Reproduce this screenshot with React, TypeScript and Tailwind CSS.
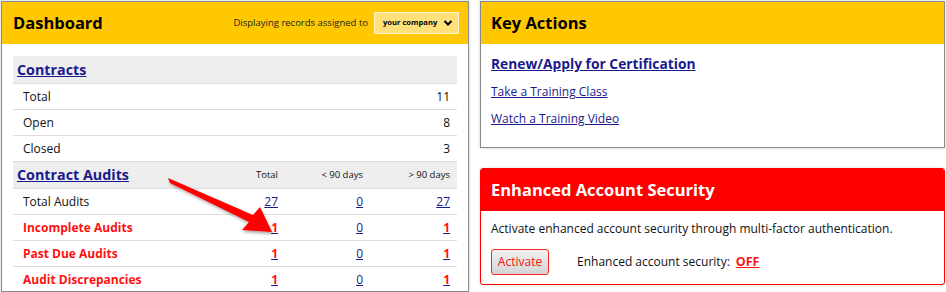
import React from "react";

const link = "text-[#1a1a8c] underline";

const contractRows = [
  { label: "Total", value: "11" },
  { label: "Open", value: "8" },
  { label: "Closed", value: "3" },
];

const auditRows = [
  { label: "Total Audits", values: ["27", "0", "27"], alert: false },
  { label: "Incomplete Audits", values: ["1", "0", "1"], alert: true },
  { label: "Past Due Audits", values: ["1", "0", "1"], alert: true },
  { label: "Audit Discrepancies", values: ["1", "0", "1"], alert: true },
];

const Arrow = () => (
  <svg className="absolute left-0 top-0 pointer-events-none" width="300" height="260" viewBox="0 0 300 260">
    <defs>
      <filter id="sh" x="-20%" y="-20%" width="140%" height="140%">
        <feDropShadow dx="1" dy="2" stdDeviation="1.5" floodColor="#000" floodOpacity="0.35" />
      </filter>
    </defs>
    <polygon
      points="166,176 251,213 258,205 270,230 240,228 247,220 168,181"
      fill="#ff0000"
      filter="url(#sh)"
    />
  </svg>
);

const Dashboard = () => (
  <div className="relative w-[468px] border border-[#8a8a8a] bg-white shadow-[0_0_3px_rgba(0,0,0,0.2)]">
    <div className="h-[42px] bg-[#ffc800] flex items-center justify-between pl-[11px] pr-[9px]">
      <h1 className="text-[16.5px] font-bold text-black">Dashboard</h1>
      <div className="flex items-center gap-[6px]">
        <span className="text-[9.5px] text-[#222]">Displaying records assigned to</span>
        <div className="w-[85px] h-[22px] bg-[#ffe07a] border border-[#fff3c4] flex items-center justify-between pl-[8px] pr-[5px]">
          <span className="text-[7.6px] font-bold text-black whitespace-nowrap">your company</span>
          <svg width="10" height="8" viewBox="0 0 10 8">
            <path d="M1.5 2 L5 5.5 L8.5 2" stroke="#000" strokeWidth="2" fill="none" />
          </svg>
        </div>
      </div>
    </div>
    <div className="pt-3 px-[11px]">
      <div className="h-[28px] bg-[#eeeeee] border-b border-[#dddddd] flex items-center pl-1">
        <a className={`${link} text-[14.3px] font-bold`}>Contracts</a>
      </div>
      {contractRows.map((r) => (
        <div key={r.label} className="h-[26px] border-b border-[#dddddd] flex items-center justify-between pl-[10px] pr-[7px] text-[12px] text-[#111]">
          <span>{r.label}</span>
          <span>{r.value}</span>
        </div>
      ))}
      <div className="h-[27px] bg-[#eeeeee] border-b border-[#dddddd] grid grid-cols-[1fr_80px_85px_87px] items-center pl-1 pr-[7px] text-[9.5px] text-[#111]">
        <a className={`${link} text-[14.3px] font-bold`}>Contract Audits</a>
        <span className="text-right">Total</span>
        <span className="text-right">&lt; 90 days</span>
        <span className="text-right">&gt; 90 days</span>
      </div>
      {auditRows.map((r) => (
        <div key={r.label} className="h-[26px] border-b border-[#dddddd] grid grid-cols-[1fr_80px_85px_87px] items-center pl-[10px] pr-[7px] text-[12px]">
          <span className={r.alert ? "font-bold text-[#ff1111]" : "text-[#111]"}>{r.label}</span>
          {r.values.map((v, i) => (
            <span key={i} className="text-right">
              <a
                className={`underline decoration-[#1a1a8c] ${
                  r.alert && v === "1" ? "text-[#ff1111] font-bold" : "text-[#1a1a8c]"
                }`}
              >
                {v}
              </a>
            </span>
          ))}
        </div>
      ))}
    </div>
    <Arrow />
  </div>
);

const KeyActions = () => (
  <div className="h-[147px] border border-[#8a8a8a] bg-white shadow-[0_0_3px_rgba(0,0,0,0.2)]">
    <div className="h-[42px] bg-[#ffc800] flex items-center px-[10px]">
      <h2 className="text-[16.5px] font-bold text-black">Key Actions</h2>
    </div>
    <div className="px-[10px] pt-[9px] flex flex-col">
      <a className={`${link} text-[13.8px] font-bold leading-[22px]`}>Renew/Apply for Certification</a>
      <a className={`${link} text-[12px] leading-[27px] mt-[3px]`}>Take a Training Class</a>
      <a className={`${link} text-[12px] leading-[27px]`}>Watch a Training Video</a>
    </div>
  </div>
);

const Security = () => (
  <div className="h-[117px] border border-[#ff0000] rounded-[3px] bg-white overflow-hidden shadow-[0_0_3px_rgba(0,0,0,0.15)]">
    <div className="h-[42px] bg-[#ff0000] flex items-center px-[10px]">
      <h2 className="text-[16.5px] font-bold text-white">Enhanced Account Security</h2>
    </div>
    <div className="px-[10px] pt-[9px]">
      <p className="text-[12px] text-[#111] leading-[18px]">
        Activate enhanced account security through multi-factor authentication.
      </p>
      <div className="flex items-center mt-[11px]">
        <button className="w-[58px] h-[26px] rounded-[3px] border border-[#ff2222] bg-gradient-to-b from-[#f2f2f2] to-[#d4d4d4] text-[12px] font-medium text-[#ff1111]">
          Activate
        </button>
        <span className="ml-[28px] text-[12px] text-[#111]">Enhanced account security:</span>
        <a className="ml-[6px] text-[12.5px] font-bold text-[#ff1111] underline">OFF</a>
      </div>
    </div>
  </div>
);

export default function App() {
  return (
    <div className="w-[946px] h-[292px] overflow-hidden bg-white pt-px pl-px flex gap-[11px]" style={{ fontFamily: "'Open Sans', 'Liberation Sans', sans-serif" }}>
      <Dashboard />
      <div className="w-[465px] flex flex-col gap-[20px]">
        <KeyActions />
        <Security />
      </div>
    </div>
  );
}
